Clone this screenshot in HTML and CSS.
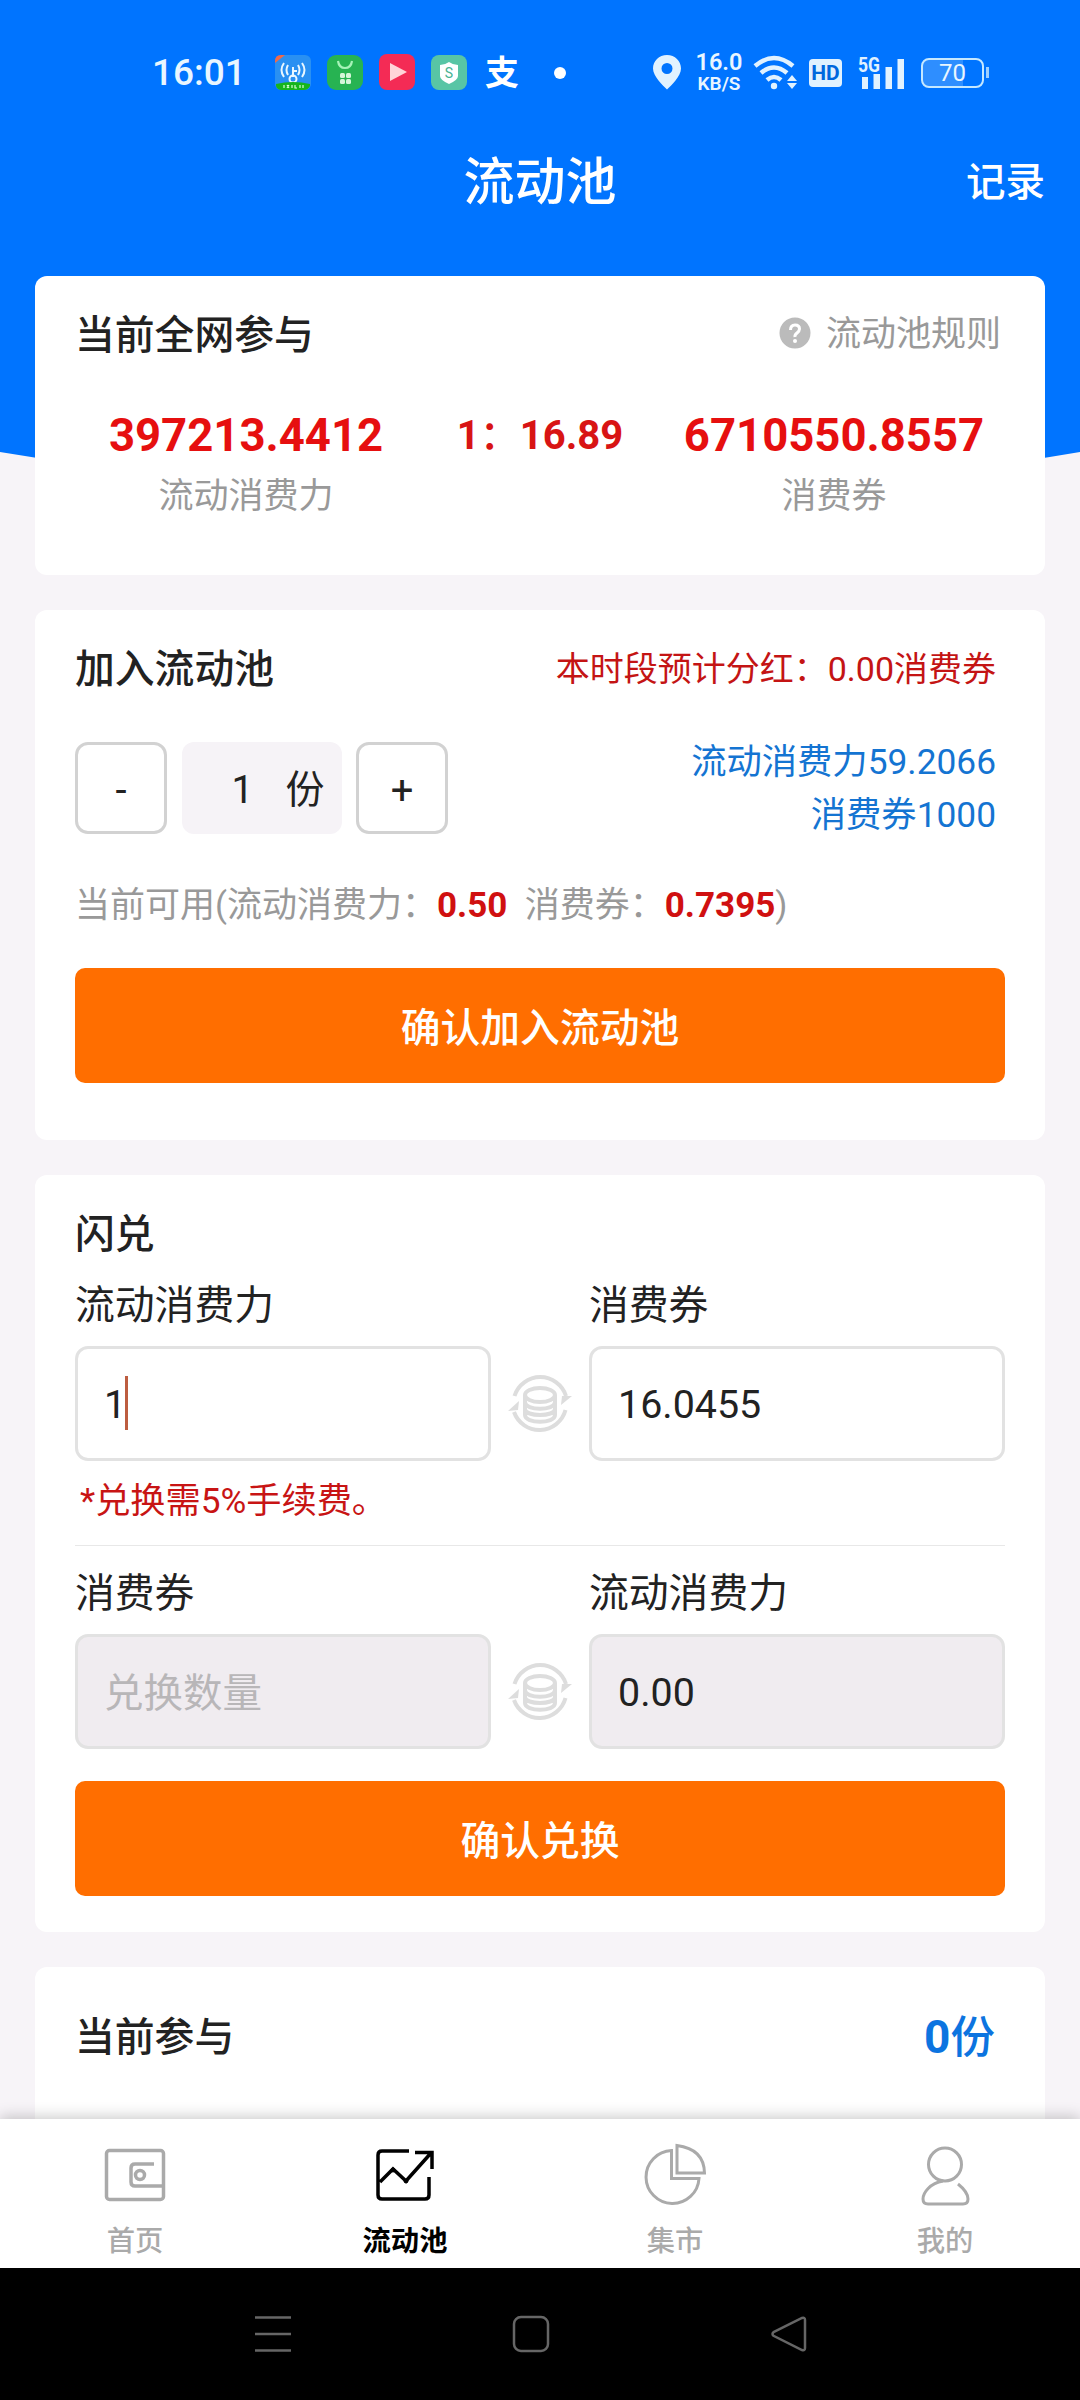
FILE: index.html
```html
<!DOCTYPE html>
<html lang="zh-CN">
<head>
<meta charset="utf-8">
<title>流动池</title>
<link rel="stylesheet" href="styles.css">
</head>
<body>
<svg width="0" height="0" class="defs">
  <symbol id="swap" viewBox="0 0 66 66">
    <g fill="none" stroke="#ddd" stroke-width="4">
      <path d="M7.500 25A27 27 0 0 1 59 25"/>
      <path d="M58.500 39A27 27 0 0 1 7 41"/>
      <ellipse cx="33" cy="24" rx="15" ry="7"/>
      <path d="M18 24v20c0 9 30 9 30 0V24M18 31c0 9 30 9 30 0M18 38c0 8 30 8 30 0"/>
    </g>
    <path d="M54 34l1-9 10 0zM12 30l-1 9-10 1z" fill="#ddd"/>
  </symbol>
</svg>
<div class="screen">
  <svg class="backdrop" width="1080" height="510"><path d="M0 0H1080V452Q540 544 0 452Z" fill="#0074ff"/></svg>

  <div class="status">
    <span class="clock">16:01</span>
    <svg class="apps" width="192" height="40" viewBox="0 0 192 40">
      <rect y="2" width="36" height="35" rx="6" fill="#2990f2"/>
      <path d="M0 10V8q0-6 6-6h4z" fill="#f0694b"/>
      <g fill="none" stroke="#e9f7ff" stroke-width="2">
        <path d="M13 12q-3 5 0 10M9 10q-5 7 0 14M23 12q3 5 0 10M27 10q5 7 0 14M18 14v10M18 18h4"/>
        <circle cx="18" cy="26" r="3.5"/>
      </g>
      <path d="M1 31q17-4 34 0v2q-2 4-6 4H7q-5 0-6-4z" fill="#16b51b"/>
      <path d="M9 32v3m3-3l2 3m0-3l-2 3m5-3v3m3-3v3h2m3-3v3m3-3v3" stroke="#d9ffd5" stroke-width="1.2" fill="none"/>
      <rect x="52" y="2" width="36" height="35" rx="9" fill="#27b352"/>
      <path d="M63 8q1 7 7 7t7-7" fill="none" stroke="#a6f3b8" stroke-width="2.2"/>
      <g fill="#d4f6d9"><rect x="65" y="20" width="5" height="5" rx="1.5"/><rect x="71" y="20" width="5" height="5" rx="1.5"/><rect x="65" y="26" width="5" height="5" rx="1.5"/><rect x="71" y="26" width="5" height="5" rx="1.5"/></g>
      <rect x="104" y="1" width="36" height="36" rx="8" fill="#f42b55"/>
      <path d="M115 10l17 9-17 9z" fill="#ffd3d8"/>
      <rect x="156" y="2" width="36" height="35" rx="8" fill="#58c5a5"/>
      <path d="M174 9q4 3 9 3v11q0 4-9 8-9-4-9-8V12q5 0 9-3z" fill="#fff"/>
      <text x="174" y="25" text-anchor="middle" font-family="Roboto" font-size="14" fill="#46b292">S</text>
    </svg>
    <span class="pay">支</span>
    <span class="dot"></span>
    <svg class="pin" width="28" height="35" viewBox="0 0 28 35"><path fill="#e1f2ff" fill-rule="evenodd" d="M14 0C6 0 0 6 0 13.500c0 8 10 17 14 21 4-4 14-13 14-21C28 6 22 0 14 0zm0 8a5.500 5.500 0 1 1 0 11 5.500 5.500 0 0 1 0-11z"/></svg>
    <div class="speed"><b>16.0</b><b class="unit">KB/S</b></div>
    <svg class="wifi" width="46" height="36" viewBox="0 0 46 36">
      <g fill="none" stroke="#e1f2ff" stroke-width="4.500"><path d="M2 11q19-16 38 0M8 18q13-11 26 0M14 25q7-6 14 0"/></g>
      <circle cx="21" cy="31" r="3.200" fill="#e1f2ff"/><path fill="#e1f2ff" d="M34 26l5-6 5 6zM34 28h10l-5 6z"/>
    </svg>
    <span class="hd">HD</span>
    <svg class="signal" width="48" height="36" viewBox="0 0 48 36">
      <text x="0" y="17" font-family="Roboto" font-weight="700" font-size="20" textLength="22" lengthAdjust="spacingAndGlyphs" fill="#e1f2ff">5G</text>
      <path fill="#e1f2ff" d="M4 22h6v12H4zM15.500 19h6.500v15h-6.500zM27.500 12h6.500v22h-6.500zM39.500 4h6.500v30h-6.500z"/>
    </svg>
    <span class="battery">70</span><span class="nub"></span>
  </div>

  <header class="titlebar"><span></span><h1>流动池</h1><a class="record">记录</a></header>

  <main>
    <section class="card pool">
      <div class="head"><h2>当前全网参与</h2>
        <span class="rules"><svg width="32" height="32" viewBox="0 0 32 32"><circle cx="16" cy="16" r="15.500" fill="#bbb"/><path d="M11.500 13q0-5 4.500-5t4.500 4q0 2-2.500 4t-2 4" fill="none" stroke="#fff" stroke-width="3"/><circle cx="16" cy="24" r="2" fill="#fff"/></svg>流动池规则</span>
      </div>
      <div class="totals">
        <div><strong>397213.4412</strong><span>流动消费力</span></div>
        <div class="ratio">1<i>：</i>16.89</div>
        <div><strong>6710550.8557</strong><span>消费券</span></div>
      </div>
    </section>

    <section class="card join">
      <div class="head"><h2>加入流动池</h2><span class="bonus">本时段预计分红：0.00消费券</span></div>
      <div class="amount">
        <div class="stepper"><span class="step">-</span><span class="qty"><i>1</i>份</span><span class="step">+</span></div>
        <div class="cost">流动消费力59.2066<br>消费券1000</div>
      </div>
      <p class="avail">当前可用(流动消费力：<b>0.50</b>&nbsp; 消费券：<b>0.7395</b>)</p>
      <div class="button">确认加入流动池</div>
    </section>

    <section class="card swap">
      <h2>闪兑</h2>
      <div class="fields labels"><span>流动消费力</span><span></span><span>消费券</span></div>
      <div class="fields"><div class="input">1<span class="caret"></span></div><svg width="66" height="66"><use href="#swap"/></svg><div class="input">16.0455</div></div>
      <p class="fee">*兑换需5%手续费。</p>
      <div class="fields labels second"><span>消费券</span><span></span><span>流动消费力</span></div>
      <div class="fields"><div class="input off hint">兑换数量</div><svg width="66" height="66"><use href="#swap"/></svg><div class="input off">0.00</div></div>
      <div class="button">确认兑换</div>
    </section>

    <section class="card mine"><h2>当前参与</h2><span class="shares"><b>0</b>份</span></section>
  </main>

  <nav class="tabs">
    <a><svg width="64" height="64" viewBox="0 0 64 64" fill="none" stroke="#aaa" stroke-width="3.500"><rect x="3.500" y="7.500" width="57" height="49" rx="3"/><path d="M51 21H32q-4 0-4 4v14q0 4 4 4h28"/><circle cx="37" cy="32" r="4.500"/></svg>首页</a>
    <a class="on"><svg width="64" height="64" viewBox="0 0 64 64" fill="none" stroke="#000" stroke-width="3.500"><path d="M36 8H9q-4 0-4 4v40q0 4 4 4h43q4 0 4-4V34M42 9.500h17V26M58 10L33 38 20 26 7 39"/><circle cx="20" cy="27" r="2" fill="#000" stroke-width="1"/><circle cx="33" cy="38" r="2" fill="#000" stroke-width="1"/></svg>流动池</a>
    <a><svg width="64" height="64" viewBox="0 0 64 64" fill="none" stroke="#aaa" stroke-width="3"><path d="M28.500 7.500v28H56a26.500 26.500 0 1 1-27.500-28z"/><path d="M34 2.500v27.500h27.500Q61 6 34 2.500z"/></svg>集市</a>
    <a><svg width="64" height="64" viewBox="0 0 64 64" fill="none" stroke="#aaa" stroke-width="3"><circle cx="32" cy="21.500" r="16.500"/><path d="M30 38C17 40 10 50 10 56q0 5 5 5h35q5 0 5-5 0-7-10-15"/></svg>我的</a>
  </nav>
  <div class="system">
    <svg width="40" height="40" viewBox="0 0 40 40" fill="none" stroke="#666" stroke-width="2.500"><path d="M2 3.500h36M2 20h36M2 36.500h36"/></svg>
    <svg width="40" height="40" viewBox="0 0 40 40" fill="none" stroke="#666" stroke-width="2.500"><rect x="3" y="3" width="34" height="34" rx="7"/></svg>
    <svg width="40" height="40" viewBox="0 0 40 40" fill="none" stroke="#666" stroke-width="2.500"><path d="M4.500 18.200L33 4q3-1 3 2v28q0 3-3 2L4.500 21.800q-2-1.800 0-3.600z"/></svg>
  </div>
</div>
</body>
</html>
```
FILE: styles.css
```css
* { box-sizing: border-box; }
body { margin: 0; font-family: Roboto, "Noto Sans CJK SC", sans-serif; color: #222; background: #f7f4f8; }
h1, h2, p { margin: 0; }
svg { display: block; flex: none; }
.defs { position: absolute; }
.screen { position: relative; isolation: isolate; width: 1080px; height: 2400px; overflow: hidden; display: flex; flex-direction: column; }
.backdrop { position: absolute; top: 0; left: 0; z-index: -1; }

.status { flex: none; height: 144px; padding-top: 1px; display: flex; align-items: center; color: #e9f6ff; padding-left: 152px; white-space: nowrap; }
.clock { width: 123px; font-size: 37px; font-weight: 500; line-height: 44px; }
.pay { margin-left: 18px; width: 36px; font-size: 34px; font-weight: 700; line-height: 40px; color: #fff; }
.dot { margin-left: 33px; width: 12px; height: 12px; border-radius: 50%; background: #fff; }
.pin { margin-left: 87px; }
.speed { margin-left: 15px; width: 46px; display: flex; flex-direction: column; align-items: center; font-size: 23.500px; line-height: 21px; }
.speed b { font-weight: 600; }
.unit { font-size: 19px; line-height: 21px; }
.wifi { margin-left: 11px; }
.hd { margin-left: 10px; width: 33px; height: 28px; border-radius: 4px; background: #e1f2ff; color: #0068dd; font: 700 21px/29px Roboto, sans-serif; text-align: center; }
.signal { margin-left: 16px; overflow: visible; }
.battery { margin-left: 15px; width: 63px; height: 30px; border: 2px solid #c5e8ff; border-radius: 8px; background: linear-gradient(90deg, #2e8eff 68%, transparent 68%); font-size: 24px; line-height: 27px; text-align: center; }
.nub { width: 3px; height: 11px; margin-left: 2px; background: #9fd0ff; }

.titlebar { flex: none; height: 76px; margin-bottom: 56px; padding: 0 35px; display: grid; grid-template-columns: 1fr auto 1fr; align-items: center; color: #fff; }
.titlebar h1 { font-size: 51px; font-weight: 500; line-height: 78px; }
.record { justify-self: end; font-size: 39.500px; font-weight: 500; line-height: 76px; }

main { flex: none; height: 1843px; padding: 0 35px; display: flex; flex-direction: column; gap: 35px; overflow: hidden; }
.card { flex: none; background: #fff; border-radius: 12px; padding: 0 40px; }
.card h2 { font-size: 39.800px; font-weight: 500; line-height: 62px; height: 60px; }
.head { display: flex; justify-content: space-between; align-items: center; height: 60px; }

.pool { height: 299px; padding-top: 29px; }
.rules { display: flex; align-items: center; gap: 15px; padding-right: 4px; font-size: 35px; line-height: 60px; color: #999; }
.rules svg { margin-top: -4px; }
.totals { margin-top: 39px; display: grid; grid-template-columns: 342px 246px 342px; text-align: center; line-height: 64px; }
.totals div { display: flex; flex-direction: column; }
.totals strong { font-size: 45.5px; color: #e60f0f; }
.totals span { font-size: 35px; line-height: 57px; color: #999; }
.totals .ratio { font-size: 40px; font-weight: 700; color: #d81414; display: block; }
.ratio i { font-style: normal; font-weight: 500; }

.join { height: 530px; padding-top: 29px; }
.bonus { font-size: 34px; line-height: 60px; color: #c41414; padding-right: 9px; }
.amount { display: flex; justify-content: space-between; margin-top: 43px; height: 92px; }
.stepper { display: flex; gap: 14.500px; }
.step { width: 92px; border: 3px solid #d2d2d2; border-radius: 13px; font-size: 40px; line-height: 91px; text-align: center; }
.qty { width: 160px; background: #f6f3f7; border-radius: 12px; font-size: 39px; line-height: 97px; padding-left: 50px; }
.qty i { font-style: normal; margin-right: 32px; }
.cost { margin-top: -6px; padding-right: 9px; font-size: 35.300px; line-height: 53px; text-align: right; color: #1474d2; white-space: nowrap; }
.avail { margin-top: 42px; font-size: 35px; line-height: 60px; color: #999; white-space: nowrap; }
.avail b { color: #d01010; }
.button { height: 115px; border-radius: 10px; background: #ff6e00; color: #fff; font-size: 39.800px; font-weight: 500; line-height: 121px; text-align: center; }
.join .button { margin-top: 32px; }

.swap { height: 757px; padding-top: 29px; }
.fields { display: grid; grid-template-columns: 416px 98px 416px; align-items: center; justify-items: center; }
.input { position: relative; width: 100%; height: 115px; border: 3px solid #e2e2e2; border-radius: 13px; font-size: 39.400px; line-height: 112px; padding-left: 26px; }
.off { background: #f0ecf0; }
.hint { color: #b8b6b8; line-height: 113px; font-size: 39.500px; }
.caret { position: absolute; left: 47px; top: 27px; width: 3px; height: 54px; background: #bd5d40; }
.labels { font-size: 39.8px; line-height: 60px; justify-items: start; margin: 12px 0 10px; }
.fee { height: 85px; padding-left: 5px; font-size: 35.200px; line-height: 81px; color: #c81414; border-bottom: 1.500px solid #e8e8e8; }
.labels.second { margin: 18px 0 10px; }
.swap .button { margin-top: 32px; }

.mine { height: 200px; padding: 40px 50px 0 40px; display: flex; justify-content: space-between; align-items: flex-start; }
.shares { font-size: 44.500px; line-height: 60px; font-weight: 500; color: #0c74e0; }
.shares b { font-size: 46px; }

.tabs { flex: none; position: relative; height: 149px; padding-top: 24px; display: grid; grid-template-columns: repeat(4, 1fr); background: #fff; box-shadow: 0 -2px 14px rgba(0, 0, 0, .22); font-size: 28.300px; font-weight: 500; color: #aaa; }
.tabs a { display: flex; flex-direction: column; align-items: center; line-height: 36px; gap: 17px; }
.tabs .on { color: #000; font-weight: 700; }
.system { position: relative; flex: none; height: 132px; background: #000; display: flex; gap: 218px; padding: 46px 0 0 253px; }
```
